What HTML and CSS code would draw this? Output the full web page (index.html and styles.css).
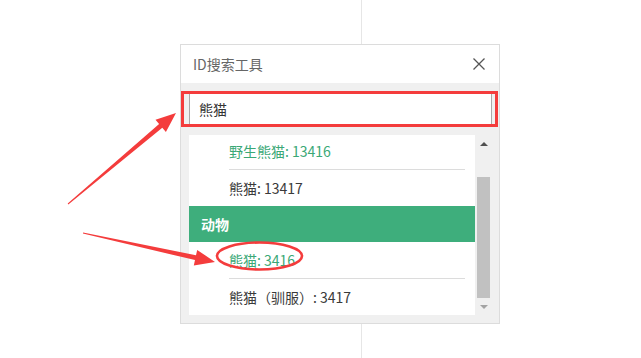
FILE: index.html
```html
<!DOCTYPE html>
<html lang="zh-CN">
<head>
<meta charset="utf-8">
<title>ID搜索工具</title>
<link rel="stylesheet" href="styles.css">
</head>
<body>
<div class="stage">
  <div class="dialog">
    <div class="dlg-head">
      <span class="dlg-title">ID搜索工具</span>
      <span class="dlg-close">
        <svg width="12" height="12" viewBox="0 0 12 12"><path d="M0.5 0.5 L11.5 11.5 M11.5 0.5 L0.5 11.5" stroke="#555" stroke-width="1.3" fill="none"/></svg>
      </span>
    </div>
    <div class="dlg-body">
      <div class="search">
        <input class="search-input" type="text" value="熊猫">
      </div>
      <div class="results">
        <div class="viewport">
          <div class="list">
            <div class="item item-hit">野生熊猫: 13416</div>
            <div class="item">熊猫: 13417</div>
            <div class="group">动物</div>
            <div class="item item-hit">熊猫: 3416</div>
            <div class="item">熊猫（驯服）: 3417</div>
          </div>
        </div>
        <div class="scrollbar">
          <div class="sb-btn"><span class="tri-up"></span></div>
          <div class="sb-track"><div class="sb-thumb"></div></div>
          <div class="sb-btn"><span class="tri-down"></span></div>
        </div>
      </div>
    </div>
  </div>
</div>
<svg class="annotations" width="641" height="358" viewBox="0 0 641 358">
  <rect x="182.5" y="92.5" width="314" height="33" fill="none" stroke="#f43c3c" stroke-width="3"/>
  <ellipse cx="259.5" cy="256" rx="42.5" ry="13.5" fill="none" stroke="#f43c3c" stroke-width="2.6"/>
  <polygon fill="#f43c3c" points="68.3,204.4 162.3,127.8 165.9,132.0 176,113 155.5,119.8 159.1,124.0 67.7,203.6"/>
  <polygon fill="#f43c3c" points="82.9,233.5 195.0,260.1 193.8,265.5 215,262 197.2,249.9 196.0,255.3 83.1,232.5"/>
</svg>
</body>
</html>
```
FILE: styles.css
```css
* { box-sizing: border-box; }
html, body { margin: 0; padding: 0; }
body {
  width: 641px;
  height: 358px;
  overflow: hidden;
  position: relative;
  font-family: "Microsoft YaHei", "Noto Sans CJK SC", sans-serif;
  background: #fff linear-gradient(to right, transparent 361px, #e6e6e6 361px, #e6e6e6 362px, transparent 362px);
}
.stage {
  padding: 44px 0 0 180px;
}
.dialog {
  width: 320px;
  border: 1px solid #dcdcdc;
  background: #fff;
}
.dlg-head {
  height: 38px;
  display: flex;
  align-items: center;
  justify-content: space-between;
  padding: 0 14px 0 12px;
}
.dlg-title {
  font-size: 14px;
  color: #666;
}
.dlg-close {
  display: flex;
  width: 12px;
  height: 12px;
}
.dlg-body {
  background: #f0f0f0;
  padding: 8px 7px 8px 8px;
}
.search {
  height: 36px;
  padding: 2px 0;
  display: flex;
}
.search-input {
  flex: 1;
  height: 32px;
  margin: 0;
  border: 1px solid #a9a9a9;
  background: #fff;
  padding: 0 0 0 9px;
  font-family: inherit;
  font-size: 14px;
  color: #333;
  outline: none;
}
.results {
  margin-top: 8px;
  height: 180px;
  display: flex;
}
.viewport {
  flex: 1;
  overflow: hidden;
  background: #fff;
}
.list {
  margin-top: -2px;
}
.item {
  height: 36px;
  line-height: 36px;
  margin: 0 10px 0 40px;
  font-size: 14px;
  color: #3a3a3a;
}
.item + .item {
  height: 37px;
  border-top: 1px solid #dcdcdc;
}
.item-hit {
  color: #3aa876;
}
.group {
  height: 36px;
  line-height: 36px;
  padding-left: 12px;
  background: #3eae7c;
  color: #fff;
  font-size: 14px;
  font-weight: bold;
}
.scrollbar {
  width: 17px;
  background: #f0f0f0;
  display: flex;
  flex-direction: column;
}
.sb-btn {
  height: 17px;
  display: flex;
  align-items: center;
  justify-content: center;
}
.tri-up {
  width: 0; height: 0;
  border-left: 4px solid transparent;
  border-right: 4px solid transparent;
  border-bottom: 4px solid #505050;
}
.tri-down {
  width: 0; height: 0;
  border-left: 4px solid transparent;
  border-right: 4px solid transparent;
  border-top: 4px solid #a3a3a3;
}
.sb-track {
  flex: 1;
  display: flex;
  flex-direction: column;
  justify-content: flex-end;
}
.sb-thumb {
  height: 121px;
  margin: 0 2px;
  background: #c1c1c1;
}
.annotations {
  position: absolute;
  left: 0;
  top: 0;
  pointer-events: none;
}
```
